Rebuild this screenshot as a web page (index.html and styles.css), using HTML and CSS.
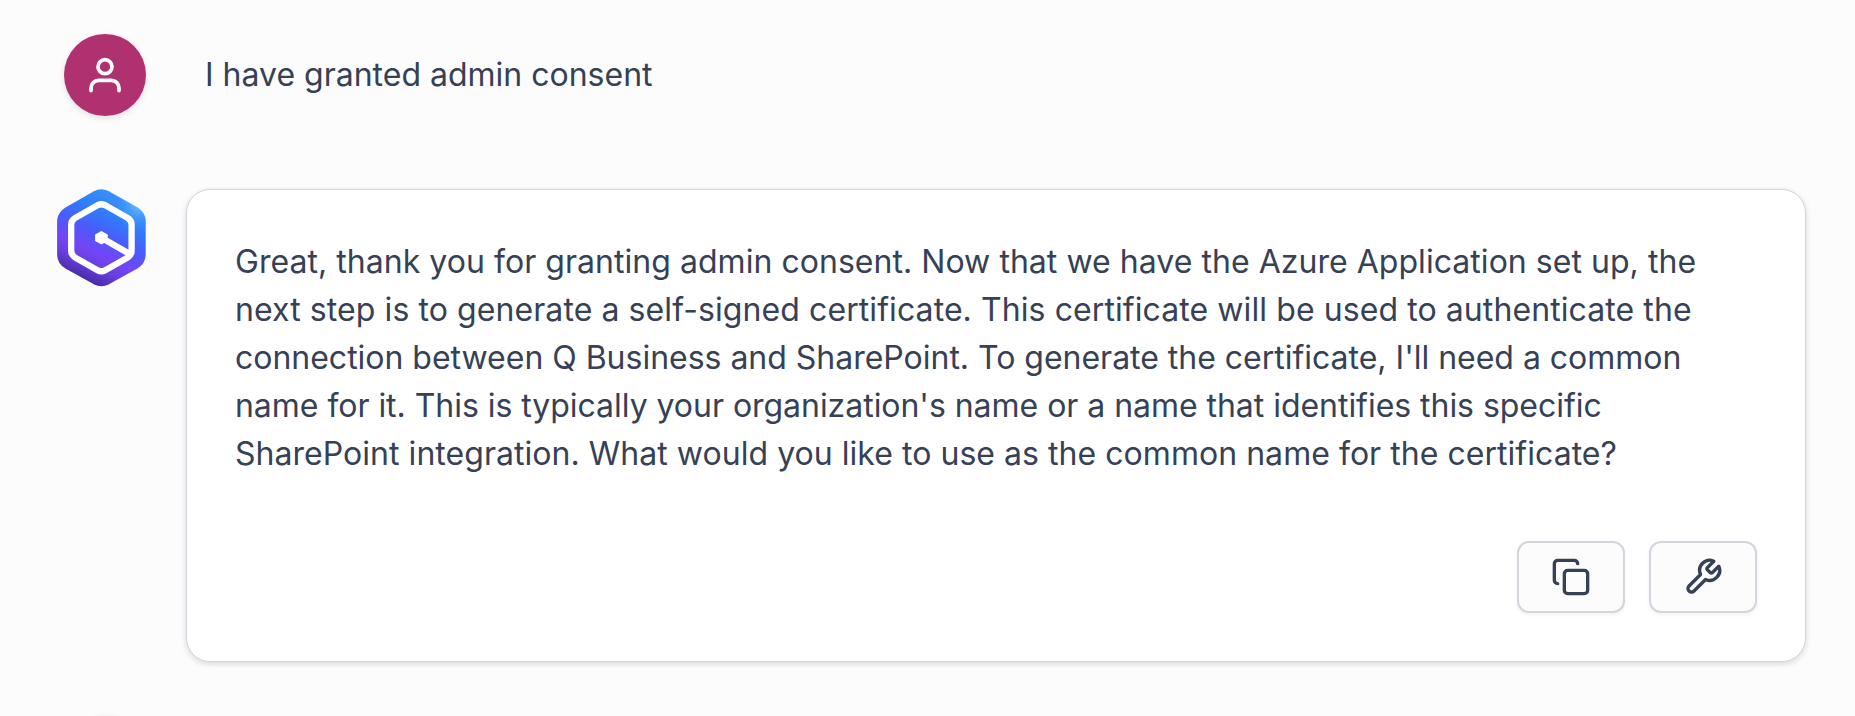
FILE: index.html
```html
<!DOCTYPE html>
<html lang="en">
<head>
<meta charset="utf-8">
<title>Chat</title>
<link rel="stylesheet" href="styles.css">
</head>
<body>
<main class="chat">
  <section class="message message-user">
    <div class="avatar">
      <svg class="avatar-icon" viewBox="0 0 40 40" aria-hidden="true">
        <circle cx="20" cy="11.7" r="7"/>
        <path d="M6 35.6v-2.6a7.6 7.6 0 0 1 7.6-7.6h12.8a7.6 7.6 0 0 1 7.6 7.6v2.6"/>
      </svg>
    </div>
    <p class="text">I have granted admin consent</p>
  </section>
  <section class="message message-bot">
    <svg class="logo" viewBox="-0.4 0 90 98" preserveAspectRatio="none" aria-hidden="true">
      <defs>
        <linearGradient id="brand" gradientUnits="userSpaceOnUse" x1="68" y1="2" x2="24" y2="94">
          <stop offset="0" stop-color="#3c96fa"/>
          <stop offset="0.28" stop-color="#2f7dfb"/>
          <stop offset="0.48" stop-color="#4b5bfa"/>
          <stop offset="0.68" stop-color="#7444f6"/>
          <stop offset="0.8" stop-color="#6640dc"/>
          <stop offset="1" stop-color="#41259a"/>
        </linearGradient>
        <radialGradient id="glow" gradientUnits="userSpaceOnUse" cx="82" cy="17" r="26">
          <stop offset="0" stop-color="#6cc4ff" stop-opacity="0.85"/>
          <stop offset="1" stop-color="#3a90fa" stop-opacity="0"/>
        </radialGradient>
        <path id="hexagon" d="M37.5 2.2Q45 -1.6 52.5 2.2L81 18.5Q89 23.5 89.3 32V66Q89 75 81 79.8L52.5 95.8Q45 99.6 37.5 95.8L9 79.8Q1 75 0.7 66V32Q1 23.5 9 18.5Z"/>
      </defs>
      <use href="#hexagon" fill="url(#brand)"/>
      <use href="#hexagon" fill="url(#glow)"/>
      <path class="logo-line" d="M41.5 16.2Q45 14.5 48.5 16.2L71.5 29.3Q75.2 31.8 75.2 36V62Q75.2 66.2 71.5 68.7L48.5 81.8Q45 83.5 41.5 81.8L18.5 68.7Q14.8 66.2 14.8 62V36Q14.8 31.8 18.5 29.3Z"/>
      <path class="logo-line" d="M45 49L72 64.5"/>
      <path fill="#fff" d="M45 42.3L51.3 45.7V52.3L45 55.7L38.7 52.3V45.7Z"/>
    </svg>
    <article class="card">
      <p class="text"><span class="loose">Great, thank you for granting admin consent. Now that we have the Azure Application set up, the</span><br><span class="looser">next step is to generate a self-signed certificate. This certificate will be used to authenticate the</span><br><span class="snug">connection between Q Business and SharePoint. To generate the certificate, I'll need a common</span><br><span class="tight">name for it. This is typically your organization's name or a name that identifies this specific</span><br><span class="loose">SharePoint integration. What would you like to use as the common name for the certificate?</span></p>
      <div class="actions">
        <button class="action" aria-label="Copy">
          <svg class="action-icon" viewBox="0 0 24 24"><rect x="8" y="8" width="14" height="14" rx="2"/><path d="M4 16c-1.1 0-2-.9-2-2V4c0-1.1.9-2 2-2h10c1.1 0 2 .9 2 2"/></svg>
        </button>
        <button class="action" aria-label="Tools">
          <svg class="action-icon" viewBox="0 0 24 24"><path d="M14.7 6.3a1 1 0 0 0 0 1.4l1.6 1.6a1 1 0 0 0 1.4 0l3.77-3.77a6 6 0 0 1-7.94 7.94l-6.91 6.91a2.12 2.12 0 0 1-3-3l6.91-6.91a6 6 0 0 1 7.94-7.94l-3.76 3.76z"/></svg>
        </button>
      </div>
    </article>
  </section>
  <section class="message message-next">
    <div class="avatar"></div>
  </section>
</main>
</body>
</html>
```
FILE: styles.css
```css
* { box-sizing: border-box; }

body {
  margin: 0;
  height: 716px;
  overflow: hidden;
  background: #fcfcfc;
  color: #364156;
  font-family: Inter, "Liberation Sans", sans-serif;
}

.chat {
  height: 716px;
  overflow: hidden;
  padding-top: 34px;
}

.message {
  display: flex;
  align-items: flex-start;
}

.message-user {
  align-items: center;
  gap: 59px;
  padding-left: 64px;
}

.avatar {
  display: flex;
  flex: none;
  align-items: center;
  justify-content: center;
  width: 82px;
  height: 82px;
  border-radius: 50%;
  background: #b03170;
  box-shadow: 0 2px 6px rgba(0, 0, 0, 0.12);
}

.avatar-icon {
  width: 40px;
  height: 40px;
}

.avatar-icon,
.action-icon {
  fill: none;
  stroke: #fff;
  stroke-width: 3.7;
  stroke-linecap: round;
  stroke-linejoin: round;
}

.text {
  margin: 0;
  font-size: 32px;
  line-height: 48px;
  white-space: nowrap;
}

.loose { letter-spacing: 0.04px; }
.looser { letter-spacing: 0.085px; }
.snug { letter-spacing: -0.015px; }
.tight { letter-spacing: -0.035px; }

.message-bot {
  gap: 40px;
  margin-top: 73px;
  padding-left: 56px;
}

.logo {
  flex: none;
  width: 90px;
  height: 97.5px;
}

.logo-line {
  fill: none;
  stroke: #fff;
  stroke-width: 6.3;
}

.card {
  width: 1620px;
  height: 473px;
  padding: 48px 48px 47px;
  border: 1px solid #d1d5de;
  border-radius: 24px;
  background: #fff;
  box-shadow: 0 2px 6px rgba(0, 0, 0, 0.14);
}

.actions {
  display: flex;
  justify-content: flex-end;
  gap: 24px;
  margin-top: 63px;
}

.action {
  display: flex;
  align-items: center;
  justify-content: center;
  width: 108px;
  height: 72px;
  padding: 0;
  border: 2px solid #d1d5dc;
  border-radius: 12px;
  background: #fcfcfc;
  box-shadow: 0 2px 4px rgba(0, 0, 0, 0.05);
}

.action-icon {
  width: 40px;
  height: 40px;
  stroke: #364156;
  stroke-width: 2;
}

.message-next {
  margin-top: 54px;
  padding-left: 64px;
}
```
